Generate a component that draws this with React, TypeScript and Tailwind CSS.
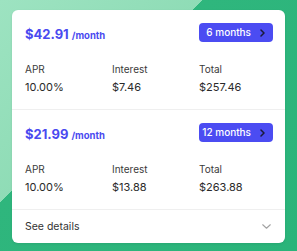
import React from "react";

type Plan = {
  monthly: string;
  months: string;
  apr: string;
  interest: string;
  total: string;
};

const plans: Plan[] = [
  { monthly: "$42.91", months: "6 months", apr: "10.00%", interest: "$7.46", total: "$257.46" },
  { monthly: "$21.99", months: "12 months", apr: "10.00%", interest: "$13.88", total: "$263.88" },
];

function ChevronRight() {
  return (
    <svg width="5" height="8" viewBox="0 0 5 8" fill="none" className="shrink-0">
      <path d="M1 1l3 3-3 3" stroke="#1b1b3a" strokeWidth="1.5" strokeLinecap="round" strokeLinejoin="round" />
    </svg>
  );
}

function ChevronDown() {
  return (
    <svg width="9" height="5" viewBox="0 0 9 5" fill="none">
      <path d="M0.75 0.75l3.75 3.5 3.75-3.5" stroke="#a3a3a3" strokeWidth="1.1" strokeLinecap="round" strokeLinejoin="round" />
    </svg>
  );
}

function PlanRow({ plan }: { plan: Plan }) {
  return (
    <section className="border-b border-[#efefef] px-[13px] pt-[13px] pb-[13px]">
      <div className="flex h-[19px] items-center justify-between">
        <p className="font-bold text-[#4a4af0]">
          <span className="text-[13px]">{plan.monthly}</span>
          <span className="ml-[3px] text-[9.5px]">/month</span>
        </p>
        <button
          type="button"
          className="mr-[-1px] flex h-[19px] w-[74px] items-center justify-end gap-[9px] rounded-[4px] bg-[#4b4cf2] pr-[8px] text-[10px] font-medium text-white"
        >
          {plan.months}
          <ChevronRight />
        </button>
      </div>
      <div className="mt-[19px] grid grid-cols-[87px_87px_1fr] text-[#2a2a2a]">
        <div>
          <p className="text-[10px] leading-[16px] text-[#3a3a3a]">APR</p>
          <p className="mt-[2px] text-[11px] leading-[17px]">{plan.apr}</p>
        </div>
        <div>
          <p className="text-[10px] leading-[16px] text-[#3a3a3a]">Interest</p>
          <p className="mt-[2px] text-[11px] leading-[17px]">{plan.interest}</p>
        </div>
        <div>
          <p className="text-[10px] leading-[16px] text-[#3a3a3a]">Total</p>
          <p className="mt-[2px] text-[11px] leading-[17px]">{plan.total}</p>
        </div>
      </div>
    </section>
  );
}

export default function App() {
  return (
    <main
      className="h-[251px] w-[297px] overflow-hidden bg-[linear-gradient(135deg,#9de3c1_0%,#8fdcb6_37%,#2fb67d_37%,#2ab47a_100%)] px-[12px] pt-[10px] font-['Inter',sans-serif]"
    >
      <div className="w-[273px] overflow-hidden rounded-[6px] bg-white shadow-[0_1px_3px_rgba(0,0,0,0.08)]">
        {plans.map((p) => (
          <PlanRow key={p.months} plan={p} />
        ))}
        <button type="button" className="flex h-[33px] w-full items-center justify-between pl-[13px] pr-[14px] text-[10.5px] text-[#333]">
          See details
          <ChevronDown />
        </button>
      </div>
    </main>
  );
}
